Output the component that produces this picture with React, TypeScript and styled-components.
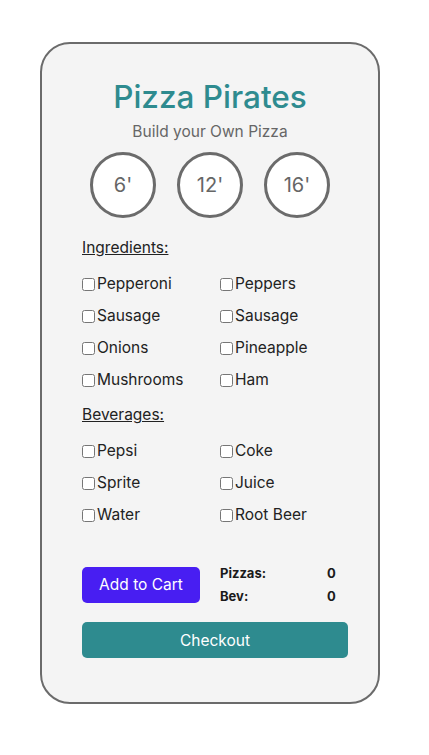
import React from "react";
import styled, { createGlobalStyle } from "styled-components";

const Global = createGlobalStyle`
  body { margin: 0; background: #ffffff; font-family: Inter, "Noto Sans", sans-serif; }
`;

const Page = styled.div`
  padding: 42px 0 0 40px;
`;

const Card = styled.div`
  width: 340px;
  height: 662px;
  box-sizing: border-box;
  border: 2px solid #6b6b6b;
  border-radius: 30px;
  background: #f4f4f4;
  display: flex;
  flex-direction: column;
  align-items: center;
  padding: 31px 40px 0 40px;
`;

const Title = styled.h1`
  margin: 0;
  font-size: 31.5px;
  line-height: 44px;
  font-weight: 500;
  color: #2e8b8f;
`;

const Subtitle = styled.div`
  margin-top: 3px;
  font-size: 15.5px;
  line-height: 20px;
  color: #666666;
`;

const Sizes = styled.div`
  display: flex;
  gap: 21px;
  margin-top: 10px;
`;

const SizeCircle = styled.button`
  width: 66px;
  height: 66px;
  border-radius: 50%;
  border: 3px solid #6b6b6b;
  background: #ffffff;
  font-family: Inter, sans-serif;
  font-size: 20px;
  color: #666666;
  padding: 0;
`;

const Section = styled.div`
  align-self: stretch;
  display: flex;
  flex-direction: column;
`;

const Heading = styled.div<{ $top: number }>`
  margin-top: ${(p) => p.$top}px;
  font-size: 15.5px;
  line-height: 20px;
  color: #222222;
  text-decoration: underline;
`;

const Grid = styled.div`
  display: grid;
  grid-template-columns: 138px 1fr;
  row-gap: 12px;
  margin-top: 16px;
`;

const Item = styled.label`
  display: flex;
  align-items: center;
  font-size: 15.5px;
  line-height: 20px;
  color: #222222;
`;

const Box = styled.input`
  width: 13px;
  height: 13px;
  margin: 0 2px 0 0;
`;

const Footer = styled.div`
  align-self: stretch;
  display: flex;
  align-items: center;
  margin-top: 39px;
`;

const CartButton = styled.button`
  width: 118px;
  height: 36px;
  border: none;
  border-radius: 5px;
  background: #481ef2;
  color: #ffffff;
  font-family: Inter, sans-serif;
  font-size: 15.5px;
  padding: 0;
`;

const Counts = styled.div`
  margin-left: 20px;
  display: grid;
  grid-template-columns: 107px auto;
  row-gap: 5px;
  font-size: 13px;
  line-height: 18px;
  font-weight: 700;
  color: #1a1a1a;
`;

const CheckoutButton = styled.button`
  align-self: flex-start;
  margin-top: 17px;
  width: 266px;
  height: 36px;
  border: none;
  border-radius: 5px;
  background: #2e8b8f;
  color: #ffffff;
  font-family: Inter, sans-serif;
  font-size: 15.5px;
  padding: 0;
`;

const ingredients = ["Pepperoni", "Peppers", "Sausage", "Sausage", "Onions", "Pineapple", "Mushrooms", "Ham"];
const beverages = ["Pepsi", "Coke", "Sprite", "Juice", "Water", "Root Beer"];

export default function App() {
  return (
    <>
      <Global />
      <Page>
        <Card>
          <Title>Pizza Pirates</Title>
          <Subtitle>Build your Own Pizza</Subtitle>
          <Sizes>
            <SizeCircle>6'</SizeCircle>
            <SizeCircle>12'</SizeCircle>
            <SizeCircle>16'</SizeCircle>
          </Sizes>
          <Section>
            <Heading $top={20}>Ingredients:</Heading>
            <Grid>
              {ingredients.map((n, i) => (
                <Item key={i}>
                  <Box type="checkbox" />
                  {n}
                </Item>
              ))}
            </Grid>
            <Heading $top={15}>Beverages:</Heading>
            <Grid>
              {beverages.map((n, i) => (
                <Item key={i}>
                  <Box type="checkbox" />
                  {n}
                </Item>
              ))}
            </Grid>
          </Section>
          <Footer>
            <CartButton>Add to Cart</CartButton>
            <Counts>
              <span>Pizzas:</span>
              <span>0</span>
              <span>Bev:</span>
              <span>0</span>
            </Counts>
          </Footer>
          <CheckoutButton>Checkout</CheckoutButton>
        </Card>
      </Page>
    </>
  );
}
